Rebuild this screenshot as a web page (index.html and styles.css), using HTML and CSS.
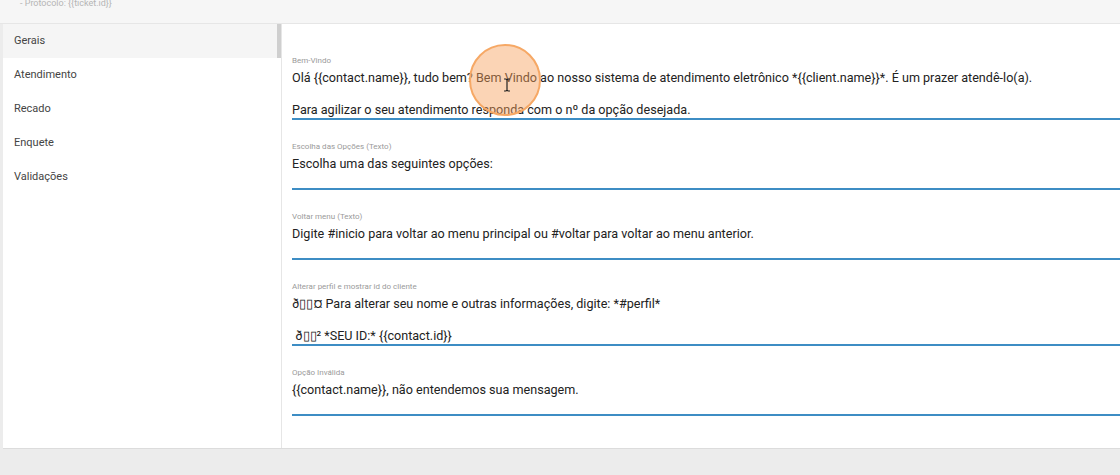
FILE: index.html
```html
<!DOCTYPE html>
<html lang="pt-BR">
<head>
  <meta charset="UTF-8">
  <meta name="viewport" content="width=device-width, initial-scale=1.0">
  <title>Configurações do Bot</title>
  <link rel="stylesheet" href="styles.css">
</head>
<body>
  <div class="top-bar">
    <span class="hint">- Protocolo: {{ticket.id}}</span>
  </div>

  <div class="card">
    <div class="side">
      <ul class="nav">
        <li class="nav-item active">Gerais</li>
        <li class="nav-item">Atendimento</li>
        <li class="nav-item">Recado</li>
        <li class="nav-item">Enquete</li>
        <li class="nav-item">Validações</li>
      </ul>
      <div class="track"><div class="thumb"></div></div>
    </div>

    <div class="main">
      <div class="field">
        <div class="field-label">Bem-Vindo</div>
        <div class="field-text">Olá {{contact.name}}, tudo bem? Bem Vindo ao nosso sistema de atendimento eletrônico *{{client.name}}*. É um prazer atendê-lo(a).

Para agilizar o seu atendimento responda com o nº da opção desejada.</div>
      </div>

      <div class="field">
        <div class="field-label">Escolha das Opções (Texto)</div>
        <div class="field-text">Escolha uma das seguintes opções:
&nbsp;</div>
      </div>

      <div class="field">
        <div class="field-label">Voltar menu (Texto)</div>
        <div class="field-text">Digite #inicio para voltar ao menu principal ou #voltar para voltar ao menu anterior.
&nbsp;</div>
      </div>

      <div class="field">
        <div class="field-label">Alterar perfil e mostrar id do cliente</div>
        <div class="field-text">ð▯▯¤ Para alterar seu nome e outras informações, digite: *#perfil*

 ð▯▯² *SEU ID:* {{contact.id}}</div>
      </div>

      <div class="field">
        <div class="field-label">Opção Inválida</div>
        <div class="field-text">{{contact.name}}, não entendemos sua mensagem.
&nbsp;</div>
      </div>
    </div>
  </div>

  <!-- click marker from the recording -->
  <div class="click-mark">
    <svg class="ibeam" width="8" height="14" viewBox="0 0 8 14">
      <path d="M1 1h2l1 1 1-1h2M4 2v10M1 13h2l1-1 1 1h2" fill="none" stroke="#222" stroke-width="1.2"/>
    </svg>
  </div>
</body>
</html>
```

FILE: styles.css
```css
body {
  margin: 0;
  background: #ececec;
  font-family: Roboto, "Liberation Sans", Arial, sans-serif;
  color: #222;
  overflow: hidden;
}

.top-bar {
  height: 23px;
  background: #f6f6f6;
  border-bottom: 1px solid #e6e6e6;
  padding-left: 20px;
  overflow: hidden;
}

.hint {
  display: block;
  margin-top: -3px;
  font-size: 9px;
  line-height: 12px;
  color: #b5b5b5;
}

.card {
  display: flex;
  height: 424px;
  margin-left: 3px;
  background: #fff;
  border-bottom: 1px solid #dcdcdc;
}

.side {
  display: flex;
  width: 278px;
  border-right: 1px solid #e6e6e6;
}

.nav {
  flex: 1;
  list-style: none;
  margin: 0;
  padding: 0;
}

.nav-item {
  height: 34px;
  line-height: 34px;
  padding-left: 11px;
  font-size: 11px;
  color: #444;
}

.nav-item.active {
  background: #f5f5f5;
}

.track {
  width: 4px;
}

.thumb {
  height: 34px;
  background: #cfcfcf;
}

.main {
  flex: 1;
  padding: 32px 0 0 10px;
  overflow: hidden;
}

.field {
  margin-bottom: 22px;
}

.field-label {
  font-size: 8px;
  line-height: 10px;
  color: #9a9a9a;
}

.field-text {
  margin-top: 4px;
  font-size: 12.6px;
  line-height: 16px;
  white-space: pre-wrap;
  color: #222;
  border-bottom: 2px solid #3d8dc4;
}

.click-mark {
  position: absolute;
  left: 469px;
  top: 44px;
  width: 68px;
  height: 68px;
  border: 2px solid #f6a865;
  border-radius: 50%;
  background: rgba(246, 160, 90, 0.45);
}

.ibeam {
  position: absolute;
  left: 32px;
  top: 32px;
}
```
